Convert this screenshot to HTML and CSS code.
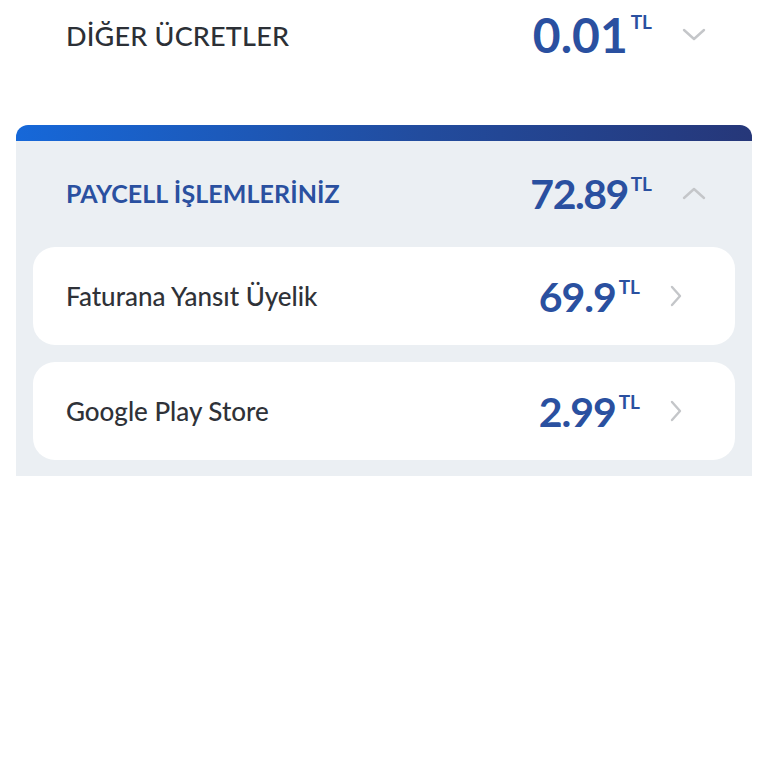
FILE: index.html
```html
<!DOCTYPE html>
<html lang="tr">
<head>
    <meta charset="UTF-8">
    <meta name="viewport" content="width=device-width, initial-scale=1.0">
    <title>Fatura Detayı</title>
    <link rel="stylesheet" href="styles.css">
</head>
<body>

<div class="summary-row">
    <span class="summary-title">DİĞER ÜCRETLER</span>
    <span class="amount big">0.01<sup>TL</sup></span>
    <svg class="chevron" width="24" height="14" viewBox="0 0 24 14"><path d="M2 2l10 9 10-9" fill="none" stroke="#c4c6c9" stroke-width="2.4" stroke-linecap="round" stroke-linejoin="round"/></svg>
</div>

<div class="card">
    <div class="card-bar"></div>
    <div class="card-body">
        <div class="card-head">
            <span class="card-title">PAYCELL İŞLEMLERİNİZ</span>
            <span class="amount">72.89<sup>TL</sup></span>
            <svg class="chevron" width="24" height="14" viewBox="0 0 24 14"><path d="M2 12l10-9 10 9" fill="none" stroke="#c4c6c9" stroke-width="2.4" stroke-linecap="round" stroke-linejoin="round"/></svg>
        </div>

        <div class="item">
            <span class="item-name">Faturana Yansıt Üyelik</span>
            <span class="amount">69.9<sup>TL</sup></span>
            <svg class="arrow" width="16" height="24" viewBox="0 0 16 24"><path d="M4 3l8 9-8 9" fill="none" stroke="#c4c6c9" stroke-width="2.4" stroke-linecap="round" stroke-linejoin="round"/></svg>
        </div>

        <div class="item">
            <span class="item-name">Google Play Store</span>
            <span class="amount">2.99<sup>TL</sup></span>
            <svg class="arrow" width="16" height="24" viewBox="0 0 16 24"><path d="M4 3l8 9-8 9" fill="none" stroke="#c4c6c9" stroke-width="2.4" stroke-linecap="round" stroke-linejoin="round"/></svg>
        </div>
    </div>
</div>

</body>
</html>
```

FILE: styles.css
```css
body {
    margin: 0;
    background: #fff;
    font-family: "Lato", "Noto Sans", sans-serif;
    color: #2c3036;
}
.summary-row {
    display: flex;
    align-items: center;
    height: 70px;
    padding: 0 62px 0 66px;
    margin-bottom: 55px;
}
.summary-title {
    flex: 1;
    font-size: 27px;
    font-weight: 500;
    letter-spacing: 0.2px;
}
.amount {
    font-size: 41px;
    font-weight: 700;
    color: #2a50a0;
    letter-spacing: -1px;
    line-height: 1;
}
.amount.big {
    font-size: 48px;
    letter-spacing: 0;
}
.amount sup {
    font-size: 19px;
    letter-spacing: 0;
    vertical-align: top;
    position: relative;
    top: 1px;
    margin-left: 3px;
}
.chevron {
    margin-left: 30px;
}
.card {
    margin: 0 16px;
}
.card-bar {
    height: 16px;
    border-radius: 12px 12px 0 0;
    background: linear-gradient(90deg, #1668d9, #224c9e 55%, #263779);
}
.card-body {
    background: #ebeff3;
    padding: 0 17px 16px;
}
.card-head {
    display: flex;
    align-items: center;
    height: 104px;
    padding: 0 29px 2px 33px;
}
.card-head .amount {
    letter-spacing: -1.5px;
}
.card-title {
    flex: 1;
    font-size: 25px;
    font-weight: 700;
    color: #2a50a0;
    letter-spacing: 0.1px;
}
.item {
    display: flex;
    align-items: center;
    height: 98px;
    background: #fff;
    border-radius: 22px;
    padding: 0 51px 0 33px;
    margin-bottom: 17px;
}
.item:last-child {
    margin-bottom: 0;
}
.item-name {
    flex: 1;
    font-size: 26px;
    font-weight: 500;
    color: #2f3238;
}
.arrow {
    margin-left: 28px;
}
```
